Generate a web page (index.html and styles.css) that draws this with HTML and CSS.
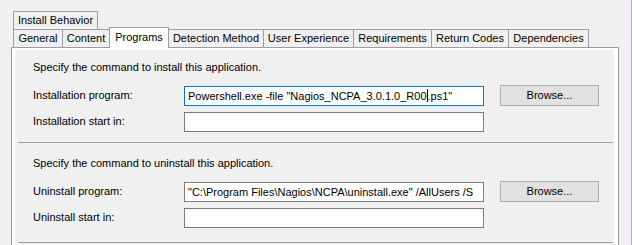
FILE: index.html
```html
<!DOCTYPE html>
<html>
<head>
<meta charset="utf-8">
<link rel="stylesheet" href="styles.css">
</head>
<body>
<div class="window">
  <div class="tabs">
    <div class="tab-row row-top">
      <div class="tab w-ib">Install Behavior</div>
    </div>
    <div class="tab-row row-main">
      <div class="tab w-gen">General</div>
      <div class="tab w-con">Content</div>
      <div class="tab w-pro selected">Programs</div>
      <div class="tab w-det">Detection Method</div>
      <div class="tab w-ux">User Experience</div>
      <div class="tab w-req">Requirements</div>
      <div class="tab w-ret">Return Codes</div>
      <div class="tab w-dep">Dependencies</div>
    </div>
  </div>
  <div class="panel">
    <div class="page">
      <div class="section s1">
        <div class="heading">Specify the command to install this application.</div>
        <div class="grid">
          <div class="label">Installation program:</div>
          <div class="field focused">Powershell.exe -file "Nagios_NCPA_3.0.1.0_R00<span class="caret"></span>.ps1"</div>
          <div class="button">Browse...</div>
          <div class="label">Installation start in:</div>
          <div class="field"></div>
          <div></div>
        </div>
      </div>
      <div class="sep"></div>
      <div class="section s2">
        <div class="heading">Specify the command to uninstall this application.</div>
        <div class="grid">
          <div class="label">Uninstall program:</div>
          <div class="field">"C:\Program Files\Nagios\NCPA\uninstall.exe" /AllUsers /S</div>
          <div class="button">Browse...</div>
          <div class="label">Uninstall start in:</div>
          <div class="field"></div>
          <div></div>
        </div>
      </div>
      <div class="sep"></div>
    </div>
  </div>
</div>
</body>
</html>
```
FILE: styles.css
```css
html, body {
  margin: 0;
  padding: 0;
}
body {
  background: #f0f0f0;
  font-family: "Liberation Sans", Arial, sans-serif;
  font-size: 11px;
  color: #000;
}
.window {
  width: 631px;
  height: 245px;
  overflow: hidden;
  border-right: 1px solid #6cc3ee;
  background: #f0f0f0;
}
.tabs {
  padding: 11px 0 0 13px;
}
.tab-row {
  display: flex;
  align-items: flex-start;
  height: 18px;
}
.tab {
  box-sizing: border-box;
  height: 18px;
  border: 1px solid #9c9ca3;
  border-bottom: none;
  background: #f0f0f0;
  text-align: center;
  line-height: 17px;
  white-space: nowrap;
  margin-left: -1px;
}
.tab:first-child {
  margin-left: 0;
}
.row-main {
  margin-top: 0;
}
.tab.selected {
  position: relative;
  z-index: 2;
  height: 21px;
  margin-top: -2px;
  margin-bottom: -1px;
  background: #fff;
  line-height: 18px;
}
.w-ib { width: 85px; }
.w-gen { width: 50px; }
.w-con { width: 48px; }
.w-pro { width: 60px; }
.w-det { width: 96px; }
.w-ux { width: 91px; }
.w-req { width: 79px; }
.w-ret { width: 78px; }
.w-dep { width: 81px; }

.panel {
  box-sizing: border-box;
  margin-left: 11px;
  width: 608px;
  height: 220px;
  border: 1px solid #9c9ca3;
  background: #fff;
  padding: 2px 4px 0 3px;
}
.page {
  background: #f0f0f0;
  height: 100%;
}
.section {
  padding-left: 18px;
}
.s1 {
  padding-top: 11px;
  padding-bottom: 10px;
}
.s2 {
  padding-top: 14px;
  padding-bottom: 14px;
}
.heading {
  line-height: 13px;
  height: 13px;
}
.grid {
  margin-top: 11px;
  display: grid;
  grid-template-columns: 135px 300px 99px;
  grid-auto-rows: 21px;
  column-gap: 16px;
  row-gap: 5px;
  align-items: end;
}
.label {
  align-self: center;
  line-height: 13px;
}
.field {
  box-sizing: border-box;
  height: 20px;
  border: 1px solid #7a7a7a;
  background: #fff;
  padding-left: 3px;
  line-height: 18px;
  white-space: nowrap;
  overflow: hidden;
}
.field.focused {
  border-color: #0078d7;
}
.caret {
  display: inline-block;
  width: 1px;
  height: 13px;
  background: #000;
  vertical-align: -2px;
}
.button {
  box-sizing: border-box;
  height: 21px;
  border: 1px solid #adadad;
  background: #e1e1e1;
  text-align: center;
  line-height: 19px;
}
.sep {
  height: 1px;
  background: #a0a0a0;
  margin: 0 1px 0 3px;
}
```
